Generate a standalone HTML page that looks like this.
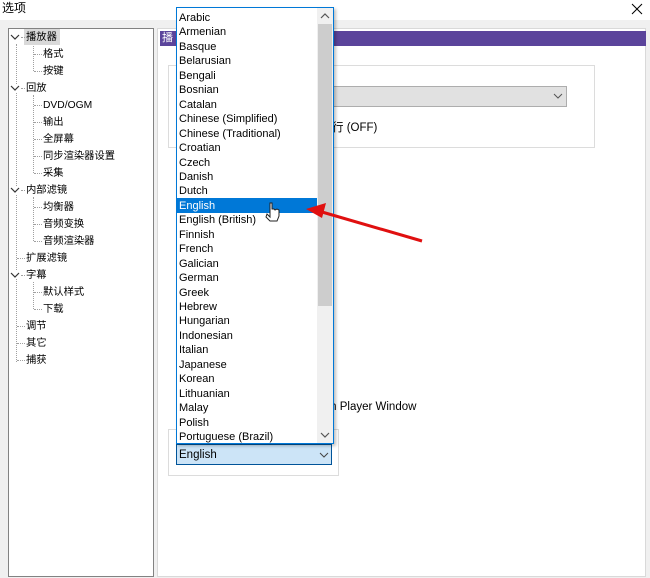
<!DOCTYPE html>
<html><head><meta charset="utf-8"><style>
*{margin:0;padding:0;box-sizing:border-box}
body{width:650px;height:578px;background:#f0f0f0;position:relative;overflow:hidden;font-family:"Liberation Sans","Noto Sans CJK SC",sans-serif;font-size:11.5px;color:#000}
.abs{position:absolute}
.t{position:absolute;white-space:nowrap;line-height:14px}
.dot{position:absolute;border-color:#a0a0a0;border-style:dotted;border-width:0}
</style></head><body>
<div class="abs" style="left:0;top:0;width:650px;height:20px;background:#fff"></div>
<div class="t" style="left:2px;top:1px;font-size:12px">选项</div>
<svg class="abs" style="left:630px;top:2px" width="14" height="14"><path d="M2 2L12 12M12 2L2 12" stroke="#000" stroke-width="1"/></svg>

<div class="abs" style="left:8px;top:28px;width:146px;height:549px;background:#fff;border:1px solid #828282"></div>
<div class="abs" style="left:157px;top:28px;width:489px;height:549px;background:#fff;border:1px solid #d9d9d9"></div>
<div class="abs" style="left:160px;top:31px;width:486px;height:15px;background:#5b449b"></div>
<div class="t" style="left:162px;top:31px;color:#fff;font-size:11px">播</div>

<!-- tree -->
<div class="dot" style="left:16px;top:44px;height:318px;border-left-width:1px"></div>
<div class="dot" style="left:33px;top:44px;height:27px;border-left-width:1px"></div>
<div class="dot" style="left:33px;top:95px;height:78px;border-left-width:1px"></div>
<div class="dot" style="left:33px;top:197px;height:44px;border-left-width:1px"></div>
<div class="dot" style="left:33px;top:282px;height:27px;border-left-width:1px"></div>
<div class="abs" style="left:24px;top:29px;width:36px;height:16px;background:#d9d9d9"></div>
<div id="tree"></div>
<script>
var rows=[[0,'播放器',1],[1,'格式'],[1,'按键'],[0,'回放',1],[1,'DVD/OGM'],[1,'输出'],[1,'全屏幕'],[1,'同步渲染器设置'],[1,'采集'],[0,'内部滤镜',1],[1,'均衡器'],[1,'音频变换'],[1,'音频渲染器'],[0,'扩展滤镜'],[0,'字幕',1],[1,'默认样式'],[1,'下载'],[0,'调节'],[0,'其它'],[0,'捕获']];
var h='';rows.forEach(function(r,i){var y=29+i*17;var x=r[0]?43:26;
if(r[2]){h+='<svg class="abs" style="left:10px;top:'+(y+4)+'px;z-index:3;background:#fff" width="10" height="8"><path d="M1 2L5 6L9 2" fill="none" stroke="#333" stroke-width="1.2"/></svg>';
h+='<div class="dot" style="left:21px;top:'+(y+8)+'px;width:4px;border-top-width:1px"></div>';}
else h+='<div class="dot" style="left:'+(r[0]?34:17)+'px;top:'+(y+8)+'px;width:8px;border-top-width:1px"></div>';
h+='<div class="t" style="left:'+x+'px;top:'+(y+2)+'px;z-index:2;font-size:10.3px">'+r[1]+'</div>';});
document.getElementById('tree').innerHTML=h;
</script>

<!-- group box top -->
<div class="abs" style="left:168px;top:65px;width:427px;height:83px;border:1px solid #dcdcdc"></div>
<div class="abs" style="left:180px;top:86px;width:387px;height:21px;background:#e1e1e1;border:1px solid #adadad"></div>
<svg class="abs" style="left:553px;top:93px" width="10" height="7"><path d="M1 1L5 5L9 1" fill="none" stroke="#555" stroke-width="1"/></svg>
<div class="t" style="left:332px;top:121px">行 (OFF)</div>
<div class="t" style="left:318px;top:400px">n in Player Window</div>

<!-- bottom group -->
<div class="abs" style="left:168px;top:429px;width:171px;height:47px;border:1px solid #dcdcdc"></div>
<div class="abs" style="left:176px;top:444px;width:156px;height:21px;background:#cce4f7;border:1px solid #005499"></div>
<div class="t" style="left:179px;top:448px">English</div>
<svg class="abs" style="left:319px;top:452px" width="10" height="7"><path d="M1 1L5 5L9 1" fill="none" stroke="#444" stroke-width="1"/></svg>

<!-- dropdown list -->
<div class="abs" style="left:176px;top:7px;width:158px;height:437px;background:#fff;border:1px solid #0078d7;box-shadow:2px 2px 3px rgba(0,0,0,.25)"></div>
<div class="abs" style="left:317px;top:8px;width:16px;height:435px;background:#f0f0f0"></div>
<div class="abs" style="left:318px;top:24px;width:14px;height:282px;background:#cdcdcd"></div>
<svg class="abs" style="left:320px;top:13px" width="10" height="7"><path d="M1 5L5 1L9 5" fill="none" stroke="#555" stroke-width="1.2"/></svg>
<svg class="abs" style="left:320px;top:432px" width="10" height="7"><path d="M1 1L5 5L9 1" fill="none" stroke="#555" stroke-width="1.2"/></svg>
<div class="abs" style="left:177px;top:198px;width:140px;height:15px;background:#0078d7"></div>
<div id="list"></div>
<script>
var L=['Arabic','Armenian','Basque','Belarusian','Bengali','Bosnian','Catalan','Chinese (Simplified)','Chinese (Traditional)','Croatian','Czech','Danish','Dutch','English','English (British)','Finnish','French','Galician','German','Greek','Hebrew','Hungarian','Indonesian','Italian','Japanese','Korean','Lithuanian','Malay','Polish','Portuguese (Brazil)'];
var s='';L.forEach(function(n,i){s+='<div class="t" style="font-size:11px;left:179px;top:'+(11+i*14.45)+'px;'+(i==13?'color:#fff':'')+'">'+n+'</div>';});
document.getElementById('list').innerHTML=s;
</script>
<!-- arrow -->
<svg class="abs" style="left:0;top:0" width="650" height="578">
<line x1="422" y1="241" x2="322" y2="212" stroke="#e01010" stroke-width="3"/>
<polygon points="306,209 326,203 322,218" fill="#e01010"/>
<path d="M270 203v14l-3-3-1 3 4 4h7l2-5v-6l-2-1-2 1-1-1-2 0v-6z" fill="#fff" stroke="#222" stroke-width="1"/>
</svg>
</body></html>
